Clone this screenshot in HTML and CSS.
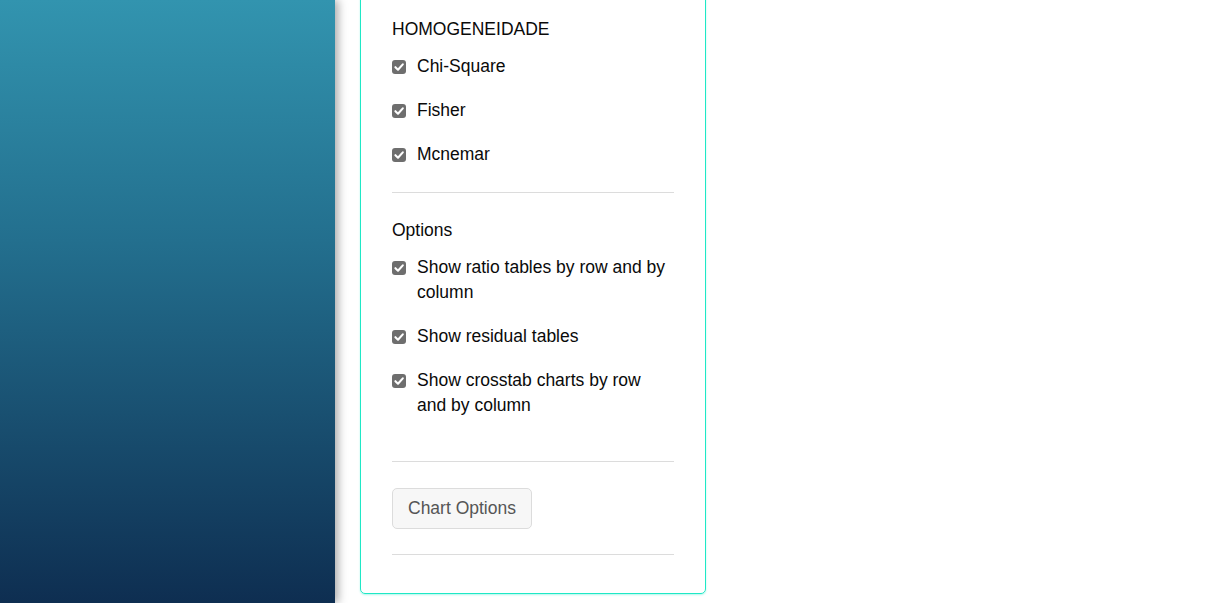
FILE: index.html
```html
<!DOCTYPE html>
<html>
<head>
<meta charset="utf-8">
<link rel="stylesheet" href="styles.css">
</head>
<body>
<div class="layout">
  <aside class="sidebar"></aside>
  <main class="main">
    <section class="card">
      <h3 class="group-title">HOMOGENEIDADE</h3>
      <ul class="checks">
        <li class="check"><span class="box"><svg viewBox="0 0 14 14" width="14" height="14"><path d="M3.4 7.2 L6 9.7 L10.8 4.4" fill="none" stroke="#fff" stroke-width="2.1" stroke-linecap="round" stroke-linejoin="round"/></svg></span><span class="label">Chi-Square</span></li>
        <li class="check"><span class="box"><svg viewBox="0 0 14 14" width="14" height="14"><path d="M3.4 7.2 L6 9.7 L10.8 4.4" fill="none" stroke="#fff" stroke-width="2.1" stroke-linecap="round" stroke-linejoin="round"/></svg></span><span class="label">Fisher</span></li>
        <li class="check"><span class="box"><svg viewBox="0 0 14 14" width="14" height="14"><path d="M3.4 7.2 L6 9.7 L10.8 4.4" fill="none" stroke="#fff" stroke-width="2.1" stroke-linecap="round" stroke-linejoin="round"/></svg></span><span class="label">Mcnemar</span></li>
      </ul>
      <hr class="sep sep-first">
      <h3 class="group-title">Options</h3>
      <ul class="checks">
        <li class="check"><span class="box"><svg viewBox="0 0 14 14" width="14" height="14"><path d="M3.4 7.2 L6 9.7 L10.8 4.4" fill="none" stroke="#fff" stroke-width="2.1" stroke-linecap="round" stroke-linejoin="round"/></svg></span><span class="label">Show ratio tables by row and by column</span></li>
        <li class="check"><span class="box"><svg viewBox="0 0 14 14" width="14" height="14"><path d="M3.4 7.2 L6 9.7 L10.8 4.4" fill="none" stroke="#fff" stroke-width="2.1" stroke-linecap="round" stroke-linejoin="round"/></svg></span><span class="label">Show residual tables</span></li>
        <li class="check"><span class="box"><svg viewBox="0 0 14 14" width="14" height="14"><path d="M3.4 7.2 L6 9.7 L10.8 4.4" fill="none" stroke="#fff" stroke-width="2.1" stroke-linecap="round" stroke-linejoin="round"/></svg></span><span class="label">Show crosstab charts by row and by column</span></li>
      </ul>
      <hr class="sep sep-second">
      <button class="btn" type="button">Chart Options</button>
      <hr class="sep sep-last">
    </section>
  </main>
</div>
</body>
</html>
```

FILE: styles.css
```css
html, body {
  margin: 0;
  padding: 0;
  height: 100%;
  overflow: hidden;
  background: #fff;
  font-family: "Liberation Sans", Arial, sans-serif;
  color: #0a0a0a;
}

.layout {
  display: flex;
  height: 603px;
}

.sidebar {
  width: 335px;
  flex: 0 0 335px;
  height: 100%;
  background: linear-gradient(to bottom, #3294af 0%, #236f8e 40%, #0e2e51 100%);
  box-shadow: 3px 0 9px rgba(0, 0, 0, 0.35);
  position: relative;
  z-index: 1;
}

.main {
  flex: 1;
  padding-left: 25px;
}

.card {
  width: 282px;
  margin-top: -20px;
  padding: 36px 31px 38px 31px;
  border: 1px solid #1fe8c6;
  border-radius: 5px;
  box-shadow: 0 1px 2px rgba(31, 232, 198, 0.35);
}

.group-title {
  margin: 0;
  font-size: 17.5px;
  font-weight: normal;
  line-height: 25px;
  color: #0a0a0a;
}

.checks {
  list-style: none;
  margin: 12px 0 0 0;
  padding: 0;
  display: flex;
  flex-direction: column;
  gap: 19px;
}

.check {
  display: flex;
  align-items: flex-start;
  gap: 11px;
  font-size: 17.5px;
  line-height: 25px;
}

.box {
  flex: 0 0 14px;
  width: 14px;
  height: 14px;
  margin-top: 6px;
  background: #6e6e6e;
  border-radius: 3px;
  display: flex;
}

.label {
  flex: 1;
}

.sep {
  border: 0;
  border-top: 1px solid #dcdcdc;
  margin: 0;
  height: 0;
}

.sep-first {
  margin-top: 25px;
  margin-bottom: 25px;
}

.sep-second {
  margin-top: 43px;
  margin-bottom: 26px;
}

.btn {
  display: block;
  font-family: "Liberation Sans", Arial, sans-serif;
  font-size: 17.5px;
  color: #555;
  background: #f7f7f7;
  border: 1px solid #dcdcdc;
  border-radius: 5px;
  height: 41px;
  padding: 0 15px;
  cursor: pointer;
}

.sep-last {
  margin-top: 25px;
}
```
